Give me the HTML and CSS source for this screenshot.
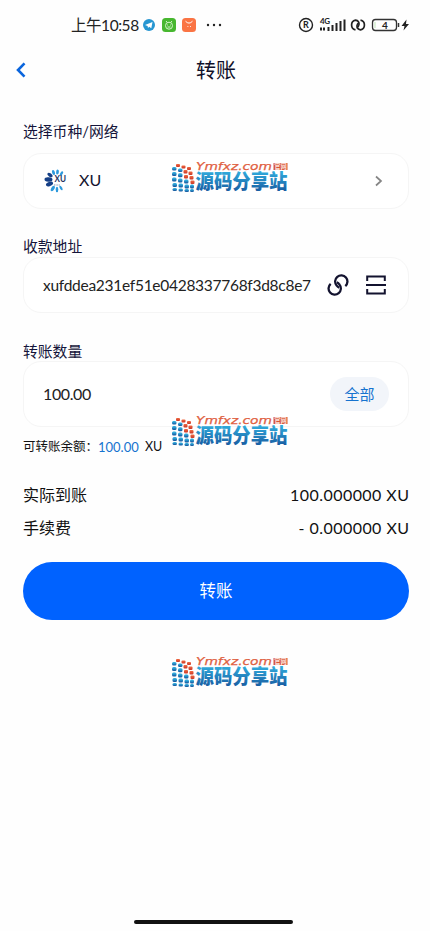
FILE: index.html
```html
<!DOCTYPE html>
<html lang="zh-CN">
<head>
<meta charset="utf-8">
<title>转账</title>
<link rel="stylesheet" href="styles.css">
</head>
<body>
<svg class="defs" aria-hidden="true">
  <defs>
    <linearGradient id="blue" x1="0" y1="0" x2="0" y2="1"><stop offset="0.25" stop-color="#2fa8da"/><stop offset="0.9" stop-color="#17599f"/></linearGradient>
    <linearGradient id="red" x1="0" y1="0" x2="0" y2="1"><stop offset="0" stop-color="#f06b43"/><stop offset="1" stop-color="#c93526"/></linearGradient>
    <symbol id="link" viewBox="0 0 24 24">
      <g fill="none" stroke="currentColor" stroke-width="2.500">
        <path d="M20 13.200A6.700 6.700 0 1 0 10.500 12.500Q11.500 14.200 13.300 14.800"/>
        <path d="M4 10.800A6.700 6.700 0 1 0 13.500 11.500Q12.500 9.800 10.700 9.200"/>
      </g>
    </symbol>
    <symbol id="mark" viewBox="0 0 118 34">
      <g fill="url(#blue)">
        <rect x="1" y="7" width="4.500" height="3.600" rx="1.500"/><rect x="7" y="8.500" width="4.500" height="3.600" rx="1.500"/>
        <rect x="1" y="12" width="4.500" height="4" rx="1.500"/><rect x="7" y="13.300" width="4.500" height="4" rx="1.500"/>
        <rect x="1" y="17.500" width="4.500" height="4" rx="1.500"/><rect x="7" y="18.500" width="4.500" height="4" rx="1.500"/><rect x="13" y="19.500" width="4.500" height="4" rx="1.500"/>
        <rect x="1.500" y="23" width="4.500" height="4" rx="1.500"/><rect x="7.500" y="23.500" width="4.500" height="4" rx="1.500"/><rect x="13.500" y="24.500" width="4.500" height="4" rx="1.500"/><rect x="19" y="24.500" width="4" height="4" rx="1.500"/>
        <rect x="1.500" y="28" width="4.500" height="3" rx="1.500"/><rect x="7.500" y="28.500" width="4.500" height="3" rx="1.500"/><rect x="13.500" y="29" width="4.500" height="3" rx="1.500"/><rect x="19" y="29" width="4" height="3" rx="1.500"/>
      </g>
      <g fill="url(#red)">
        <rect x="5" y="4" width="4" height="3" rx="1"/><rect x="10.500" y="5.500" width="4" height="3" rx="1"/><rect x="16" y="7" width="4" height="3" rx="1"/>
        <rect x="12.500" y="10" width="4" height="3.500" rx="1"/><rect x="17.500" y="11.500" width="4" height="3.500" rx="1"/>
        <rect x="13" y="15" width="4" height="3.500" rx="1"/><rect x="18.500" y="16" width="4" height="3.500" rx="1"/><rect x="19.500" y="20.500" width="4" height="3.500" rx="1"/>
      </g>
      <text class="mark-url" x="25" y="10" textLength="76" lengthAdjust="spacingAndGlyphs">Ymfxz.com</text>
      <rect x="102.500" y="3" width="14" height="7" fill="#d5543d"/>
      <text class="mark-tag" x="103.200" y="8.800">官网</text>
      <text class="mark-name" x="24.500" y="26.400" textLength="92" lengthAdjust="spacingAndGlyphs" transform="translate(0 -.2) scale(1 1.100)">源码分享站</text>
    </symbol>
  </defs>
</svg>

<div class="status">
  <span class="clock">上午10:58</span>
  <div class="apps">
    <svg width="12" height="12" viewBox="0 0 12 12"><circle cx="6" cy="6" r="6" fill="#2796d1"/><path d="M2 6 9.500 3 8.300 9.300 6.200 7.800 5 9 4.600 7z" fill="#fff"/></svg>
    <svg width="14" height="14" viewBox="0 0 14 14"><rect width="14" height="14" rx="3.500" fill="#47b72f"/><circle cx="7" cy="7.700" r="3.500" fill="none" stroke="#d3f4c9"/><path d="M4 3l1.300 1.500M10 3 8.700 4.500M5.200 7h.8M8 7h.8M5.500 9h3" stroke="#d3f4c9"/></svg>
    <svg width="14" height="14" viewBox="0 0 14 14"><rect width="14" height="14" rx="3.500" fill="#fa7444"/><path d="M3.500 3.200Q7 7 10.500 3.200M5.500 8.500h.8M8 8.500h.8" fill="none" stroke="#fff"/></svg>
    <svg class="dots" width="16" height="4" viewBox="0 0 16 4"><circle cx="2" cy="2" r="1.200"/><circle cx="8" cy="2" r="1.200"/><circle cx="14" cy="2" r="1.200"/></svg>
  </div>
  <svg class="signals" width="114" height="20" viewBox="0 0 114 20">
    <circle cx="9" cy="10" r="6.500" fill="none" stroke="#222" stroke-width="1.400"/>
    <text class="reg" x="6" y="13.300">R</text>
    <text class="net" x="23" y="8.500" textLength="10">4G</text>
    <path d="M24 12.500v3M27 12.500v3M31.500 12v4M35.500 10v6M39.500 8v8M43.500 6v10M47.500 4.500v11.500" stroke="#222" stroke-width="2"/>
    <g fill="none" stroke="#222" stroke-width="1.700"><path d="M58.500 14.800A4.900 4.900 0 0 1 58.500 5.200Q62.300 5.800 62 9.500 61.800 11.500 60 12.300"/><path d="M63.500 5.200A4.900 4.900 0 0 1 63.500 14.800Q59.700 14.200 60 10.500 60.200 8.500 62 7.700"/></g>
    <rect x="75.500" y="4.500" width="24" height="11" rx="3" fill="none" stroke="#333" stroke-width="1.300"/>
    <path d="M78 7v6" stroke="#bfe6b8"/><path d="M101.500 8v4" stroke="#333" stroke-width="1.500"/>
    <text class="charge" x="85" y="13.500">4</text>
    <path d="M109.500 4.500 104.500 11h3l-1 4.500L112 9h-3z" fill="#222"/>
  </svg>
</div>

<header class="header">
  <svg class="back" width="12" height="18" viewBox="0 0 12 18"><path d="M10.500 2.300 4 9l6.500 6.700" fill="none" stroke="#0a65dd" stroke-width="2.600"/></svg>
  <h1>转账</h1>
</header>

<main>
  <div class="label first">选择币种/网络</div>
  <div class="card coin">
    <svg class="coin-logo" width="24" height="24" viewBox="0 0 24 24">
      <g fill="#153f86"><ellipse cx="4.500" cy="10.500" rx="4" ry="2.200" transform="rotate(5 4.500 10.500)"/><ellipse cx="6" cy="6" rx="3" ry="1.700" transform="rotate(35 6 6)"/><ellipse cx="5.500" cy="15" rx="3.700" ry="2" transform="rotate(-20 5.500 15)"/></g>
      <g fill="#2c99dc"><ellipse cx="9.500" cy="3.500" rx="1.400" ry="2.600" transform="rotate(-18 9.500 3.500)"/><ellipse cx="13.500" cy="3" rx="1.400" ry="2.600" transform="rotate(5 13.500 3)"/><ellipse cx="17.500" cy="4.500" rx="1.200" ry="2.400" transform="rotate(35 17.500 4.500)"/><ellipse cx="8.800" cy="19.500" rx="1.600" ry="3" transform="rotate(30 8.800 19.500)"/><ellipse cx="13" cy="20.500" rx="1.300" ry="2.800"/><ellipse cx="17" cy="19" rx="1.200" ry="2.500" transform="rotate(-30 17 19)"/></g>
      <text class="coin-text" x="10.500" y="13" textLength="11.500" lengthAdjust="spacingAndGlyphs">XU</text>
      <path d="M10 16h6" stroke="#7f91b0" stroke-dasharray="1 .6"/>
    </svg>
    <span class="coin-name">XU</span>
    <svg class="more" width="10" height="12" viewBox="0 0 10 12"><path d="M2 1.500 7 6l-5 4.500" fill="none" stroke="#858585" stroke-width="1.700"/></svg>
  </div>

  <div class="label second">收款地址</div>
  <div class="card address">
    <span class="hash">xufddea231ef51e0428337768f3d8c8e7</span>
    <svg class="link" width="22" height="22"><use href="#link"/></svg>
    <svg class="scan" width="20" height="20" viewBox="0 0 20 20"><path d="M1.200 6V1.500h17.600V6M0 10h20M1.200 14v4.500h17.600V14" fill="none" stroke="#13132f" stroke-width="2"/></svg>
  </div>

  <div class="label third">转账数量</div>
  <div class="card amount">
    <span class="value">100.00</span>
    <button class="all">全部</button>
  </div>
  <div class="balance"><span>可转账余额：</span><b>100.00</b><span class="unit">XU</span></div>

  <div class="rows">
    <div class="row"><span>实际到账</span><span class="sum">100.000000 XU</span></div>
    <div class="row"><span>手续费</span><span class="sum">- 0.000000 XU</span></div>
  </div>
  <button class="submit">转账</button>
</main>

<svg class="mark mark-top"><use href="#mark"/></svg>
<svg class="mark mark-middle"><use href="#mark"/></svg>
<svg class="mark mark-bottom"><use href="#mark"/></svg>
<div class="home"></div>
</body>
</html>
```
FILE: styles.css
```css
* { box-sizing: border-box; }
body {
  position: relative;
  display: flex;
  flex-direction: column;
  height: 931px;
  margin: 0;
  overflow: hidden;
  background: #fefefe;
  color: #111;
  font-family: Lato, "Noto Sans CJK SC", sans-serif;
}
button { border: 0; padding: 0; font-family: inherit; }
.defs { position: absolute; width: 0; height: 0; }

.status { display: flex; align-items: center; height: 50px; padding: 0 19px 0 71px; }
.clock { width: 68px; font-size: 15.5px; line-height: 20px; letter-spacing: -.45px; white-space: nowrap; color: #222; }
.apps { display: flex; align-items: center; gap: 6px; margin-left: 4px; }
.apps svg:nth-child(2) { margin-left: 1px; }
.dots { margin-left: 4px; fill: #222; }
.signals { margin-left: auto; fill: #222; }
.reg { font-size: 9px; font-weight: 700; }
.net { font-size: 8px; font-weight: 700; }
.charge { font-size: 10px; font-weight: 700; }

.header { display: grid; grid-template-columns: 50px 1fr 48px; align-items: center; height: 40px; }
.header h1 { margin: 0; text-align: center; font-size: 20px; font-weight: 400; line-height: 40px; color: #101029; }
.back { margin-left: 14px; }

main { padding: 0 21px 0 23px; }
.label { height: 20px; line-height: 20px; font-size: 14.8px; color: #14143a; }
.first { margin: 31px 0 12px; }
.second { height: 21px; margin-top: 27px; }
.third { margin-top: 28px; }
.card { display: flex; align-items: center; border: 1px solid #f5f5f5; border-radius: 18px; background: #fff; }
.coin { height: 56px; padding: 0 24px 0 20px; }
.coin-text { font-size: 9px; font-weight: 700; fill: #223060; }
.coin-name { margin: -2px 0 0 11px; font-size: 16px; line-height: 20px; color: #14142f; }
.more { margin-left: auto; }
.address { height: 56px; padding: 0 22px 0 19px; }
.hash { width: 268px; font-size: 15.5px; letter-spacing: -.28px; white-space: nowrap; color: #222; }
.link { margin-left: 16px; color: #13132f; }
.scan { margin-left: auto; }
.amount { height: 66px; padding: 0 19px; }
.value { font-size: 16px; letter-spacing: -.4px; line-height: 20px; color: #222; }
.all { width: 59px; height: 34px; margin-left: auto; border-radius: 17px; background: #f2f5fa; font-size: 15px; line-height: 33px; color: #1673cf; }
.balance { display: flex; height: 20px; margin-top: 10px; line-height: 20px; font-size: 12.5px; white-space: nowrap; }
.balance > span:first-child { width: 75px; }
.balance b { width: 47px; font-size: 13px; font-weight: 400; color: #1673cf; }
.balance .unit { font-size: 12.5px; }
.rows { margin-top: 21px; }
.row { display: flex; justify-content: space-between; height: 33px; line-height: 33px; font-size: 16px; }
.sum { margin-right: -.45px; letter-spacing: .45px; }
.submit { display: block; width: 100%; height: 58px; margin-top: 18px; border-radius: 29px; background: #0062ff; color: #fff; font-size: 16.5px; line-height: 57px; }

.mark { position: absolute; left: 171px; width: 118px; height: 34px; }
.mark-top { top: 160px; }
.mark-middle { top: 414px; }
.mark-bottom { top: 655px; }
.mark-url { font: italic 400 10.5px "DejaVu Sans", sans-serif; fill: #df6142; stroke: #df6142; stroke-width: .25px; }
.mark-tag { font: 700 6.3px "Noto Sans CJK SC", sans-serif; fill: #fbe0d8; }
.mark-name { font: 900 18.5px "Noto Sans CJK SC", sans-serif; fill: url(#blue); }
.home { width: 159px; height: 4px; margin: auto 0 7px 134px; border-radius: 2px; background: #111; }
```
